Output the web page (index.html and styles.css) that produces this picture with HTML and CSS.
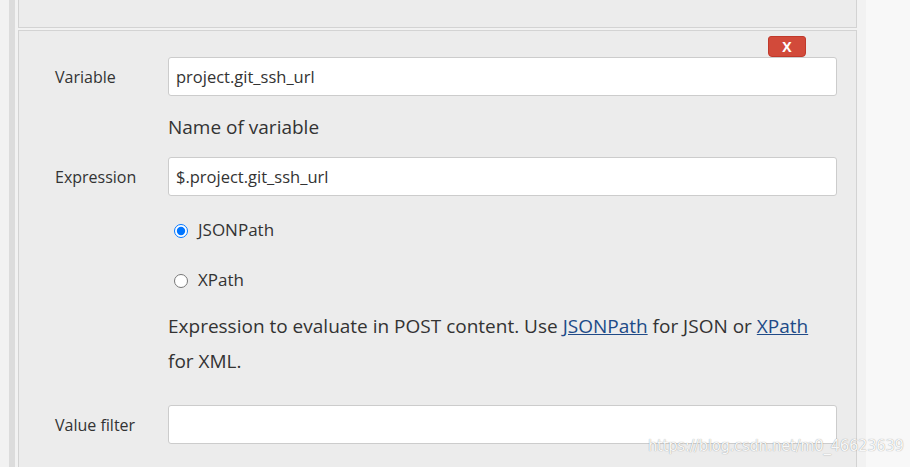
FILE: index.html
```html
<!DOCTYPE html>
<html>
<head>
<meta charset="utf-8">
<link rel="stylesheet" href="styles.css">
</head>
<body>
<div class="page">
  <div class="main">
    <div class="rail"></div>
    <div class="content">
      <div class="panel panel-top"></div>
      <div class="panel panel-form">
        <div class="delete-row"><button class="delete-btn">X</button></div>
        <div class="form-row">
          <label class="label">Variable</label>
          <div class="field"><div class="input">project.git_ssh_url</div></div>
        </div>
        <div class="help-row help-short">Name of variable</div>
        <div class="form-row row-expr">
          <label class="label">Expression</label>
          <div class="field"><div class="input">$.project.git_ssh_url</div></div>
        </div>
        <div class="radio-row row-json"><input type="radio" name="t" checked><span>JSONPath</span></div>
        <div class="radio-row row-xpath"><input type="radio" name="t"><span>XPath</span></div>
        <div class="help-row help-long">Expression to evaluate in POST content. Use <a href="#">JSONPath</a> for JSON or <a href="#">XPath</a><br>for XML.</div>
        <div class="form-row row-filter">
          <label class="label">Value filter</label>
          <div class="field"><div class="input"></div></div>
        </div>
      </div>
    </div>
    <div class="right-gap"></div>
  </div>
  <div class="side"></div>
  <div class="watermark">https://blog.csdn.net/m0_46623639</div>
</div>
</body>
</html>
```

FILE: styles.css
```css
html, body {
  margin: 0;
  padding: 0;
}
body {
  font-family: "Open Sans", "Noto Sans", sans-serif;
  color: #333;
  background: #f8f8f8;
}
.page {
  position: relative;
  display: flex;
  width: 910px;
  height: 467px;
  overflow: hidden;
}
.main {
  width: 866px;
  display: flex;
  background: #f2f2f2;
}
.rail {
  width: 6px;
  margin-left: 9px;
  background: #dcdcdc;
}
.content {
  margin-left: 3px;
  width: 839px;
  display: flex;
  flex-direction: column;
}
.right-gap {
  flex: 1;
}
.side {
  flex: 1;
  background: #f8f8f8;
}
.panel {
  background: #ececec;
  border: 1px solid #d3d3d3;
}
.panel-top {
  border-top: none;
  height: 27px;
}
.panel-form {
  margin-top: 2px;
  flex: 1;
  padding: 5px 19px 0 36px;
  border-bottom: none;
}
.delete-row {
  display: flex;
  justify-content: flex-end;
  margin-right: 31px;
  height: 21px;
}
.delete-btn {
  width: 38px;
  height: 21px;
  border: 1px solid #c0392b;
  border-radius: 3px 3px 4px 4px;
  background: #d24a3a;
  color: #fff;
  font-family: "Open Sans", sans-serif;
  font-weight: 700;
  font-size: 14px;
  line-height: 19px;
  padding: 0;
}
.form-row {
  display: flex;
  align-items: center;
}
.label {
  width: 113px;
  flex: none;
  font-size: 16px;
}
.field {
  flex: 1;
}
.input {
  box-sizing: border-box;
  height: 39px;
  background: #fff;
  border: 1px solid #ccc;
  border-radius: 3px;
  padding: 0 7px;
  font-size: 16.5px;
  line-height: 37px;
  color: #333;
}
.help-row {
  margin-left: 113px;
  font-size: 19px;
  line-height: 35px;
  color: #333;
}
.help-short {
  margin-top: 14px;
}
.row-expr {
  margin-top: 12px;
}
.radio-row {
  margin-left: 119px;
  display: flex;
  align-items: center;
  height: 30px;
  font-size: 17px;
}
.radio-row input {
  width: 14px;
  height: 14px;
  margin: 3px 10px 0 0;
}
.row-json {
  margin-top: 18px;
}
.row-xpath {
  margin-top: 20px;
}
.help-long {
  margin-top: 15px;
}
.help-long a {
  color: #204a87;
  text-decoration: underline;
}
.row-filter {
  margin-top: 26px;
}
.watermark {
  position: absolute;
  left: 648px;
  top: 436px;
  font-family: "DejaVu Sans Condensed", "DejaVu Sans", sans-serif;
  font-size: 16.5px;
  color: rgba(255, 255, 255, 0.95);
  text-shadow: 0 0 1px rgba(0, 0, 0, 0.45);
  letter-spacing: -0.3px;
}
```
